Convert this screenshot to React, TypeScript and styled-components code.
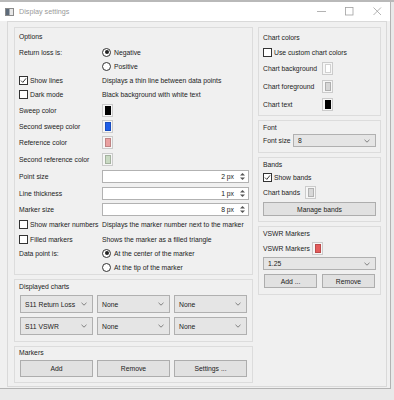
import styled, { createGlobalStyle } from "styled-components";

const GlobalStyle = createGlobalStyle`
  html, body { margin: 0; padding: 0; }
  body {
    font-family: "Liberation Sans", Arial, sans-serif;
    font-size: 6.8px;
    color: #1c1c1c;
    background: #e8e8e8;
  }
`;

const Page = styled.div`
  width: 394px;
  height: 400px;
  overflow: hidden;
  background: #e9e9e9;
`;

const TopStrip = styled.div`
  height: 2px;
  background: #b9b9b9;
`;

const Window = styled.div`
  width: 390px;
  height: 386px;
  border-right: 1px solid #b3b3b3;
  border-bottom: 1px solid #b3b3b3;
  background: #f0f0f0;
  display: flex;
  flex-direction: column;
`;

const TitleBar = styled.div`
  height: 19px;
  background: #ffffff;
  display: flex;
  align-items: center;
  padding-left: 5px;
  color: #9a9a9a;
  font-size: 7.2px;
`;

const TitleText = styled.span`
  margin-left: 5px;
  flex: 1;
`;

const Controls = styled.div`
  display: flex;
  align-items: center;
  gap: 19px;
  padding-right: 8px;
`;

const Content = styled.div`
  flex: 1;
  padding: 0 3px 1px 7px;
  display: flex;
`;

const Frame = styled.div`
  flex: 1;
  border: 1px solid #d9d9d9;
  display: flex;
  gap: 5px;
  padding: 5px 5px 0 6px;
`;

const Column = styled.div<{ $w: number }>`
  width: ${({ $w }) => $w}px;
  display: flex;
  flex-direction: column;
  gap: 4px;
`;

const Group = styled.div<{ $h: number }>`
  height: ${({ $h }) => $h}px;
  box-sizing: border-box;
  border: 1px solid #dcdcdc;
  padding: 0 4px;
  display: flex;
  flex-direction: column;
`;

const GroupTitle = styled.div<{ $h: number }>`
  height: ${({ $h }) => $h}px;
  display: flex;
  align-items: center;
`;

const Row = styled.div<{ $h: number; $col?: number }>`
  height: ${({ $h }) => $h}px;
  display: grid;
  grid-template-columns: ${({ $col }) => $col ?? 83}px 1fr;
  align-items: center;
`;

const Inline = styled.div`
  display: flex;
  align-items: center;
  gap: 2px;
`;

const Box = styled.div`
  width: 7px;
  height: 7px;
  border: 1px solid #333;
  background: #fff;
  display: flex;
  align-items: center;
  justify-content: center;
`;

const Radio = styled.div<{ $on?: boolean }>`
  width: 7px;
  height: 7px;
  border: 1px solid #333;
  border-radius: 50%;
  background: #fff;
  display: flex;
  align-items: center;
  justify-content: center;
  margin-right: 1px;
  &::after {
    content: "";
    display: ${({ $on }) => ($on ? "block" : "none")};
    width: 4px;
    height: 4px;
    border-radius: 50%;
    background: #222;
  }
`;

const SwatchBtn = styled.div`
  width: 9px;
  height: 11px;
  border: 1px solid #cbcbcb;
  background: #f6f6f6;
  display: flex;
  align-items: center;
  justify-content: center;
`;

const SwatchFill = styled.div<{ $c: string }>`
  width: 4px;
  height: 7px;
  background: ${({ $c }) => $c};
  border: 1px solid rgba(0, 0, 0, 0.18);
`;

const SpinBox = styled.div`
  height: 11px;
  width: 143px;
  border: 1px solid #b2b2b2;
  background: #fff;
  display: flex;
  align-items: center;
  justify-content: flex-end;
  gap: 5px;
  padding-right: 2px;
`;

const ComboBox = styled.div<{ $h: number }>`
  height: ${({ $h }) => $h}px;
  box-sizing: border-box;
  border: 1px solid #b0b0b0;
  background: #e5e5e5;
  display: flex;
  align-items: center;
  justify-content: space-between;
  padding: 0 5px 0 4px;
`;

const Button = styled.div<{ $h: number }>`
  height: ${({ $h }) => $h}px;
  box-sizing: border-box;
  border: 1px solid #adadad;
  background: #e1e1e1;
  display: flex;
  align-items: center;
  justify-content: center;
`;

const Grid3 = styled.div<{ $top: number }>`
  display: grid;
  grid-template-columns: repeat(3, 73px);
  column-gap: 4px;
  row-gap: 4px;
  padding: ${({ $top }) => $top}px 0 0 1px;
`;

const Grid2 = styled.div`
  display: grid;
  grid-template-columns: 53px 53px;
  column-gap: 5px;
  padding: 4px 0 0 1px;
`;

const Check = ({ on }: { on?: boolean }) => (
  <Box>
    {on && (
      <svg width="7" height="7" viewBox="0 0 7 7">
        <path d="M1 3.6 L2.8 5.4 L6 1.4" fill="none" stroke="#222" strokeWidth="0.9" />
      </svg>
    )}
  </Box>
);

const Swatch = ({ c }: { c: string }) => (
  <SwatchBtn>
    <SwatchFill $c={c} />
  </SwatchBtn>
);

const Chevron = () => (
  <svg width="6" height="4" viewBox="0 0 6 4">
    <path d="M0.5 0.8 L3 3.2 L5.5 0.8" fill="none" stroke="#666" strokeWidth="0.8" />
  </svg>
);

const Arrows = () => (
  <svg width="7" height="9" viewBox="0 0 7 9">
    <path d="M3.5 1 L6 3.6 L1 3.6 Z" fill="#555" />
    <path d="M3.5 8 L6 5.4 L1 5.4 Z" fill="#555" />
  </svg>
);

const Spin = ({ v }: { v: string }) => (
  <SpinBox>
    <span>{v}</span>
    <Arrows />
  </SpinBox>
);

const Combo = ({ text, h = 18 }: { text: string; h?: number }) => (
  <ComboBox $h={h}>
    <span>{text}</span>
    <Chevron />
  </ComboBox>
);

const App = () => (
  <Page>
    <GlobalStyle />
    <TopStrip />
    <Window>
      <TitleBar>
        <svg width="9" height="8" viewBox="0 0 9 8">
          <rect x="0.5" y="0.5" width="8" height="7" fill="#e8e8e8" stroke="#8a8a8a" />
          <rect x="1" y="1" width="3.5" height="6" fill="#5d6b7a" />
        </svg>
        <TitleText>Display settings</TitleText>
        <Controls>
          <svg width="9" height="9" viewBox="0 0 9 9">
            <path d="M0 4.5 H9" stroke="#a0a0a0" strokeWidth="0.8" />
          </svg>
          <svg width="9" height="9" viewBox="0 0 9 9">
            <rect x="0.5" y="0.5" width="7.5" height="7.5" fill="none" stroke="#a0a0a0" strokeWidth="0.8" />
          </svg>
          <svg width="9" height="9" viewBox="0 0 9 9">
            <path d="M0.5 0.5 L8 8 M8 0.5 L0.5 8" stroke="#a0a0a0" strokeWidth="0.8" />
          </svg>
        </Controls>
      </TitleBar>
      <Content>
        <Frame>
          <Column $w={239}>
            <Group $h={248}>
              <GroupTitle $h={17}>Options</GroupTitle>
              <Row $h={14}>
                <span>Return loss is:</span>
                <Inline><Radio $on />Negative</Inline>
              </Row>
              <Row $h={14}>
                <span />
                <Inline><Radio />Positive</Inline>
              </Row>
              <Row $h={14}>
                <Inline><Check on />Show lines</Inline>
                <span>Displays a thin line between data points</span>
              </Row>
              <Row $h={15}>
                <Inline><Check />Dark mode</Inline>
                <span>Black background with white text</span>
              </Row>
              <Row $h={16}>
                <span>Sweep color</span>
                <Swatch c="#000000" />
              </Row>
              <Row $h={16}>
                <span>Second sweep color</span>
                <Swatch c="#1f5ee8" />
              </Row>
              <Row $h={17}>
                <span>Reference color</span>
                <Swatch c="#eaa0a0" />
              </Row>
              <Row $h={17}>
                <span>Second reference color</span>
                <Swatch c="#c9dac3" />
              </Row>
              <Row $h={17}>
                <span>Point size</span>
                <Spin v="2 px" />
              </Row>
              <Row $h={16}>
                <span>Line thickness</span>
                <Spin v="1 px" />
              </Row>
              <Row $h={16}>
                <span>Marker size</span>
                <Spin v="8 px" />
              </Row>
              <Row $h={15}>
                <Inline><Check />Show marker numbers</Inline>
                <span>Displays the marker number next to the marker</span>
              </Row>
              <Row $h={14}>
                <Inline><Check />Filled markers</Inline>
                <span>Shows the marker as a filled triangle</span>
              </Row>
              <Row $h={14}>
                <span>Data point is:</span>
                <Inline><Radio $on />At the center of the marker</Inline>
              </Row>
              <Row $h={14}>
                <span />
                <Inline><Radio />At the tip of the marker</Inline>
              </Row>
            </Group>
            <Group $h={63}>
              <GroupTitle $h={13}>Displayed charts</GroupTitle>
              <Grid3 $top={2}>
                <Combo text="S11 Return Loss" />
                <Combo text="None" />
                <Combo text="None" />
                <Combo text="S11 VSWR" />
                <Combo text="None" />
                <Combo text="None" />
              </Grid3>
            </Group>
            <Group $h={37}>
              <GroupTitle $h={10}>Markers</GroupTitle>
              <Grid3 $top={3}>
                <Button $h={17}>Add</Button>
                <Button $h={17}>Remove</Button>
                <Button $h={17}>Settings ...</Button>
              </Grid3>
            </Group>
          </Column>
          <Column $w={123}>
            <Group $h={89}>
              <GroupTitle $h={18}>Chart colors</GroupTitle>
              <Row $h={13} $col={120}>
                <Inline><Check />Use custom chart colors</Inline>
              </Row>
              <Row $h={18} $col={59}>
                <span>Chart background</span>
                <Swatch c="#ffffff" />
              </Row>
              <Row $h={18} $col={59}>
                <span>Chart foreground</span>
                <Swatch c="#d6d6d6" />
              </Row>
              <Row $h={18} $col={59}>
                <span>Chart text</span>
                <Swatch c="#000000" />
              </Row>
            </Group>
            <Group $h={33}>
              <GroupTitle $h={12}>Font</GroupTitle>
              <Row $h={15} $col={30}>
                <span>Font size</span>
                <Combo text="8" h={13} />
              </Row>
            </Group>
            <Group $h={65}>
              <GroupTitle $h={12}>Bands</GroupTitle>
              <Row $h={15} $col={110}>
                <Inline><Check on />Show bands</Inline>
              </Row>
              <Row $h={15} $col={42}>
                <span>Chart bands</span>
                <Swatch c="#d8d8d8" />
              </Row>
              <Button $h={14} style={{ marginTop: 2 }}>Manage bands</Button>
            </Group>
            <Group $h={69}>
              <GroupTitle $h={13}>VSWR Markers</GroupTitle>
              <Row $h={17} $col={49}>
                <span>VSWR Markers</span>
                <Swatch c="#e45c5c" />
              </Row>
              <Combo text="1.25" h={13} />
              <Grid2>
                <Button $h={14}>Add ...</Button>
                <Button $h={14}>Remove</Button>
              </Grid2>
            </Group>
          </Column>
        </Frame>
      </Content>
    </Window>
  </Page>
);

export default App;
